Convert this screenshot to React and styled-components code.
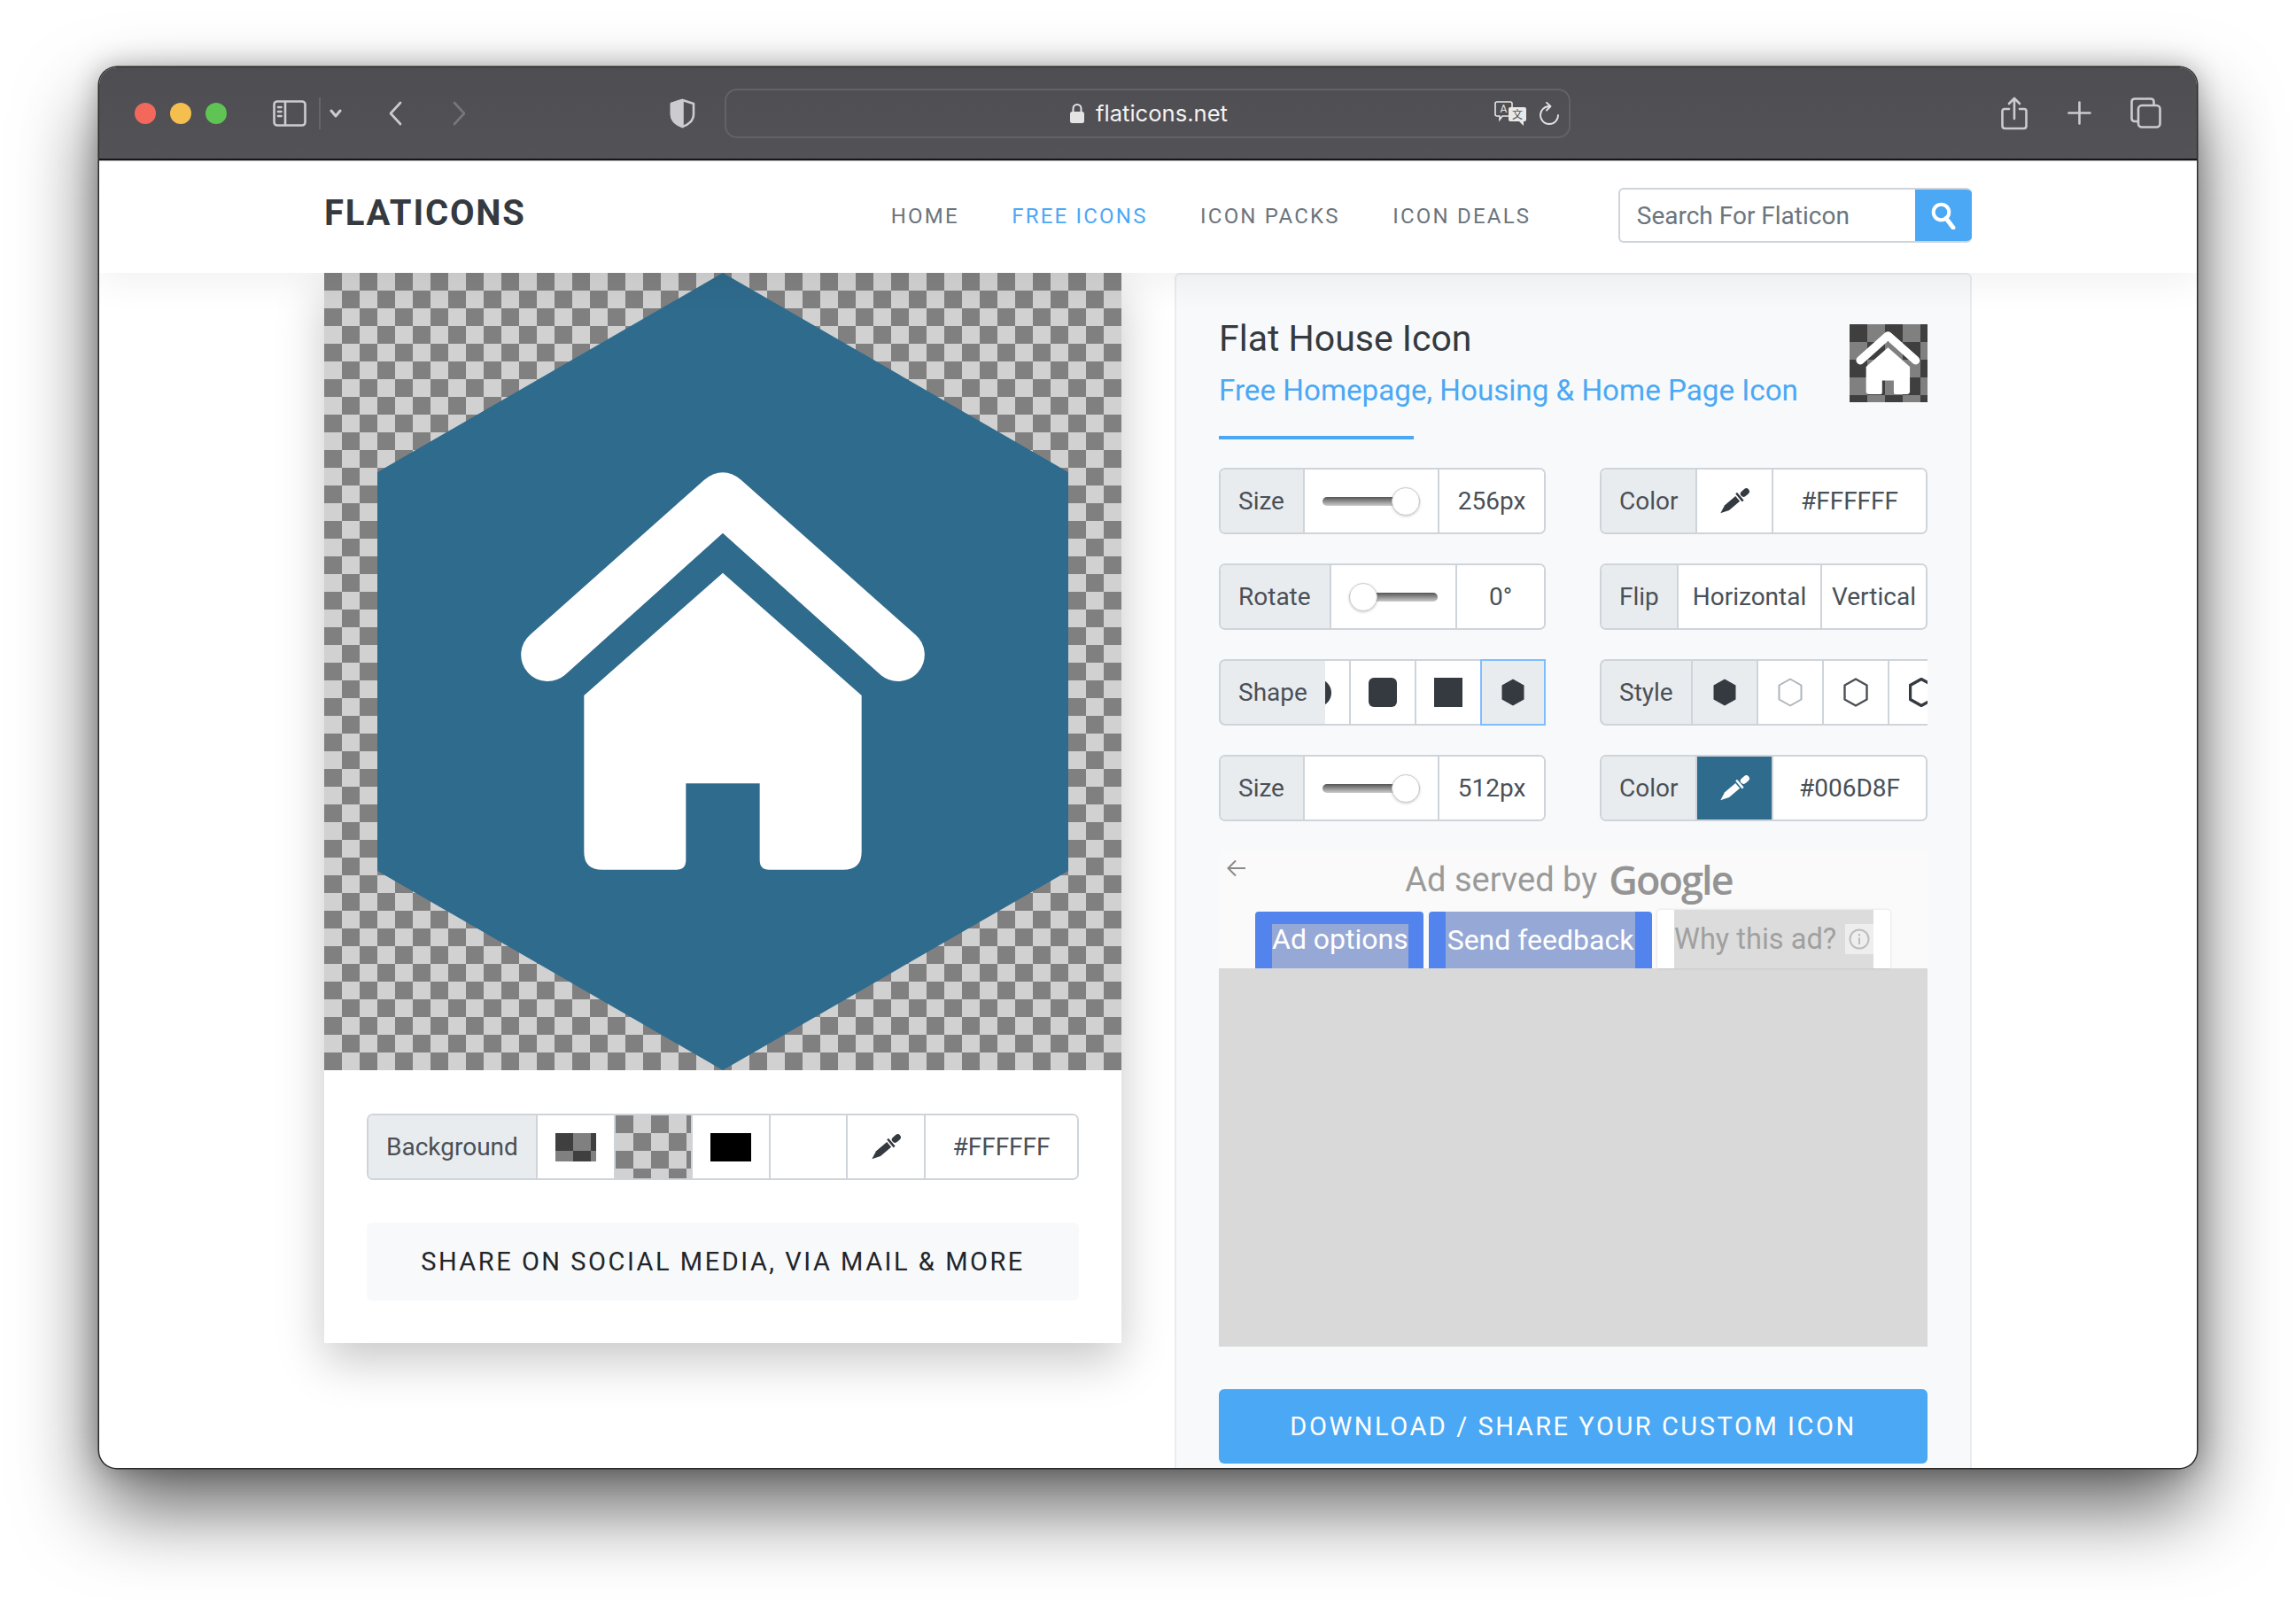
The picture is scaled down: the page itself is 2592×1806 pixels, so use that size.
import React from "react";
import styled, { createGlobalStyle, css } from "styled-components";

const BLUE = "#4ba8f4";
const TEAL = "#2f6b8d";
const LINE = "#ced4da";
const ICON = "#cbcbd0";

const checker = (dark, light, size = 40) => css`
  background: repeating-conic-gradient(${light} 0 25%, ${dark} 0 50%) 0 0 / ${size}px ${size}px;
`;

const GlobalStyle = createGlobalStyle`
  * { box-sizing: border-box; }
  html, body { margin: 0; background: #fff; }
  body { font-family: Roboto, "Liberation Sans", sans-serif; }
`;

const Page = styled.div`
  width: 2592px;
  height: 1806px;
  padding: 76px 0 0 112px;
  overflow: hidden;
`;

const Window = styled.div`
  width: 2368px;
  height: 1581px;
  border-radius: 20px;
  overflow: hidden;
  background: #fff;
  display: flex;
  flex-direction: column;
  box-shadow: 0 0 0 1.5px #2a2a2a, 0 0 30px rgba(0, 0, 0, 0.3), 0 44px 90px rgba(0, 0, 0, 0.62);
`;

const Toolbar = styled.div`
  height: 105px;
  flex: none;
  display: flex;
  align-items: center;
  padding-left: 40px;
  background: linear-gradient(#4e4d52, #535257);
  border-bottom: 2px solid #161616;
  box-shadow: 0 1px 0 #bbb;
  position: relative;
  z-index: 3;
`;

const Lights = styled.div`
  display: flex;
  gap: 16px;
`;

const Light = styled.span`
  width: 24px;
  height: 24px;
  border-radius: 50%;
  background: ${(p) => p.$color};
`;

const ToolIcon = styled.svg`
  flex: none;
  display: block;
  margin-left: ${(p) => p.$left}px;
  fill: none;
  stroke: ${(p) => (p.$dim ? "#77767b" : ICON)};
  stroke-width: 2.6;
  stroke-linecap: round;
  stroke-linejoin: round;
`;

const ToolDivider = styled.span`
  width: 2px;
  height: 36px;
  margin-left: 14px;
  background: #66656a;
`;

const UrlBar = styled.div`
  width: 955px;
  height: 56px;
  margin-left: 33px;
  border: 2px solid #636267;
  border-radius: 14px;
  display: grid;
  grid-template-columns: 1fr auto 1fr;
  align-items: center;
  padding-right: 11px;
`;

const UrlText = styled.div`
  grid-column: 2;
  display: flex;
  align-items: center;
  gap: 13px;
  margin-left: 14px;
  color: #f2f2f2;
  font-family: Inter, sans-serif;
  font-size: 25.6px;
`;

const UrlTools = styled.div`
  grid-column: 3;
  display: flex;
  justify-content: flex-end;
  align-items: center;
  gap: 14px;
`;

const Nav = styled.header`
  height: 127px;
  flex: none;
  display: flex;
  align-items: center;
  padding-left: 254px;
  background: #fff;
  box-shadow: 0 10px 40px rgba(0, 0, 0, 0.06);
  position: relative;
  z-index: 2;
`;

const Logo = styled.div`
  font-size: 40px;
  font-weight: 700;
  letter-spacing: 1.8px;
  color: #343a40;
  margin-top: -8px;
`;

const NavLinks = styled.nav`
  display: flex;
  gap: 59.5px;
  margin-left: 412px;
  margin-top: -2px;
`;

const NavLink = styled.a`
  font-size: 24px;
  letter-spacing: 2.2px;
  color: ${(p) => (p.$active ? BLUE : "#6c757d")};
`;

const Search = styled.div`
  width: 399px;
  height: 62px;
  margin-left: 98.5px;
  margin-top: -3px;
  display: flex;
  border: 2px solid ${LINE};
  border-right: none;
  border-radius: 6px;
  overflow: hidden;
`;

const SearchText = styled.div`
  flex: 1;
  display: flex;
  align-items: center;
  padding-left: 19px;
  font-size: 28px;
  color: #6c757d;
`;

const SearchButton = styled.div`
  width: 64px;
  margin: -2px 0;
  background: ${BLUE};
  display: flex;
  align-items: center;
  justify-content: center;
`;

const Content = styled.main`
  flex: 1;
  min-height: 0;
  display: flex;
  align-items: flex-start;
  gap: 60px;
  padding-left: 254px;
`;

const PreviewCard = styled.section`
  width: 900px;
  flex: none;
  background: #fff;
  box-shadow: 0 20px 50px rgba(0, 0, 0, 0.22);
`;

const Preview = styled.div`
  height: 900px;
  ${checker("#808080", "#d1d1d1")}
`;

const PreviewSvg = styled.svg`
  display: block;
`;

const CardBody = styled.div`
  padding: 49px 48px 48px;
`;

const Group = styled.div`
  display: flex;
  height: 75px;
  border: 2px solid ${LINE};
  border-radius: 7px;
  background: #fff;
  overflow: hidden;
`;

const Label = styled.div`
  flex: none;
  width: ${(p) => p.$w}px;
  background: #e9ecef;
  color: #495057;
  font-size: 28px;
  display: flex;
  align-items: center;
  padding-left: 20px;
`;

const Cell = styled.div`
  flex: ${(p) => (p.$w ? "none" : 1)};
  width: ${(p) => (p.$w ? `${p.$w}px` : "auto")};
  min-width: 0;
  border-left: 2px solid ${LINE};
  background: ${(p) => p.$bg || "#fff"};
  color: #495057;
  font-size: 28px;
  display: flex;
  align-items: center;
  justify-content: center;
  white-space: nowrap;
`;

const CheckerCell = styled(Cell)`
  ${checker("#808080", "#d1d1d1")}
  background-origin: padding-box;
`;

const Swatch = styled.span`
  width: 46px;
  height: 32px;
  ${(p) => (p.$dark ? checker("#3f3f3f", "#808080") : "background: #000;")}
`;

const ShareButton = styled.div`
  height: 88px;
  margin-top: 48px;
  border-radius: 6px;
  background: #f8f9fa;
  color: #212529;
  font-size: 29px;
  letter-spacing: 2.52px;
  display: flex;
  align-items: center;
  justify-content: center;
`;

const Panel = styled.aside`
  width: 900px;
  height: 1400px;
  flex: none;
  background: #f8f9fa;
  border: 2px solid #e9ecef;
  border-radius: 6px 6px 0 0;
  padding: 49px 48px 0;
`;

const PanelHead = styled.div`
  display: flex;
  justify-content: space-between;
  align-items: flex-start;
`;

const Title = styled.h1`
  margin: 0;
  font-size: 41px;
  line-height: 46px;
  font-weight: 400;
  color: #343a40;
`;

const Subtitle = styled.h2`
  margin: 16px 0 0;
  font-size: 33.2px;
  line-height: 40px;
  font-weight: 400;
  color: ${BLUE};
`;

const Thumb = styled.div`
  width: 88px;
  height: 88px;
  margin-top: 7px;
  display: flex;
  align-items: center;
  justify-content: center;
  ${checker("#3f3f3f", "#808080")}
`;

const Underline = styled.div`
  width: 220px;
  height: 4px;
  margin-top: 31px;
  background: ${BLUE};
`;

const Controls = styled.div`
  display: grid;
  grid-template-columns: 369px 370px;
  gap: 33px 61px;
  margin-top: 32px;
`;

const SliderCell = styled(Cell)`
  padding: 0 20px;
  justify-content: ${(p) => (p.$knob === "left" ? "flex-end" : "flex-start")};
`;

const Track = styled.div`
  position: relative;
  width: ${(p) => p.$w}px;
  height: 10px;
  border-radius: 5px;
  background: linear-gradient(#555, #ccc);
`;

const Knob = styled.span`
  position: absolute;
  top: -11px;
  ${(p) => (p.$at === "left" ? "left: 0;" : "right: 0;")}
  width: 32px;
  height: 32px;
  border-radius: 50%;
  background: #fff;
  border: 1px solid #ccc;
  box-shadow: 0 1px 3px rgba(0, 0, 0, 0.2);
`;

const ChoiceGroup = styled.div`
  display: flex;
  height: 75px;
`;

const ChoiceLabel = styled(Label)`
  width: ${(p) => p.$w}px;
  border: 2px solid ${LINE};
  border-right: none;
  border-radius: 7px 0 0 7px;
`;

const Choices = styled.div`
  flex: 1;
  min-width: 0;
  overflow: hidden;
  display: flex;
  justify-content: ${(p) => (p.$end ? "flex-end" : "flex-start")};
`;

const Choice = styled.div`
  flex: none;
  width: 74px;
  border: 2px solid ${(p) => (p.$ring ? "#80bdff" : LINE)};
  ${(p) => !p.$ring && "border-right: none;"}
  background: ${(p) => (p.$on ? "#e9ecef" : "#fff")};
  display: flex;
  align-items: center;
  justify-content: center;
`;

const ShapeSvg = styled.svg`
  display: block;
  flex: none;
`;

const AdBox = styled.div`
  margin-top: 33px;
  position: relative;
  background: #fafafa;
`;

const AdBack = styled.svg`
  position: absolute;
  left: 9px;
  top: 10px;
  fill: none;
  stroke: #8a8a8a;
  stroke-width: 2;
`;

const AdTitle = styled.div`
  height: 65px;
  margin-bottom: 2px;
  display: flex;
  align-items: center;
  justify-content: center;
  gap: 13px;
  font-size: 38px;
  color: #9a9a9a;
  padding-right: 10px;
`;

const GoogleWord = styled.span`
  font-family: "Open Sans", sans-serif;
  font-size: 45px;
  font-weight: 600;
  letter-spacing: -1.9px;
  color: #949494;
`;

const AdButtons = styled.div`
  display: flex;
  align-items: flex-end;
  gap: 6px;
  height: 66px;
  padding-left: 41px;
`;

const AdButton = styled.div`
  width: ${(p) => p.$w}px;
  height: 64px;
  padding: 0 19px;
  border-radius: 4px 4px 0 0;
  background: #5383ec;
  display: flex;
  align-items: flex-end;
`;

const AdLabel = styled.span`
  flex: 1;
  height: ${(p) => p.$h}px;
  background: #96a9d6;
  color: #fff;
  font-size: 32px;
  white-space: nowrap;
  display: flex;
  align-items: center;
  justify-content: center;
  padding-bottom: ${(p) => (p.$h === 50 ? 16 : 0)}px;
`;

const WhyButton = styled.div`
  height: 66px;
  padding: 0 19px;
  border-radius: 4px 4px 0 0;
  background: #fff;
  box-shadow: 0 0 3px rgba(0, 0, 0, 0.15);
  display: flex;
`;

const WhyInner = styled.div`
  background: #dcdcdc;
  color: #a0a0a0;
  font-size: 32.6px;
  display: flex;
  align-items: center;
  gap: 10px;
  white-space: nowrap;
`;

const InfoBox = styled.span`
  width: 32px;
  height: 34px;
  background: #eee;
  display: flex;
  align-items: center;
  justify-content: center;
`;

const AdBody = styled.div`
  height: 427px;
  background: #d9d9d9;
`;

const DownloadButton = styled.div`
  height: 84px;
  margin-top: 48px;
  border-radius: 6px;
  background: ${BLUE};
  color: #fff;
  font-size: 29px;
  letter-spacing: 2.55px;
  display: flex;
  align-items: center;
  justify-content: center;
`;

const HouseGlyph = ({ size, x, y }) => (
  <svg width={size} height={size} x={x} y={y} viewBox="0 0 1560 1560" fill="#fff" style={{ display: "block" }}>
    <path d="M117 648 L705 125 Q768 75 830 125 L1419 648 A90 90 0 1 1 1299 782 L768 305 L237 782 A90 90 0 1 1 117 648 Z" />
    <path d="M768 440 L1238 855 V1385 Q1238 1445 1175 1445 H925 Q893 1445 893 1412 V1153 H643 V1412 Q643 1445 610 1445 H360 Q298 1445 298 1385 V855 Z" />
  </svg>
);

const Dropper = ({ color = "#343a40" }) => (
  <svg width="36" height="32" viewBox="0 0 36 32" fill={color} style={{ display: "block" }}>
    <g transform="rotate(50 18 16)">
      <rect x="14.5" y="-5" width="7" height="11" rx="3.5" />
      <rect x="12" y="7" width="12" height="2.6" rx="1" />
      <path d="M14.2 11.2 H21.8 V27 L18 36.5 L14.2 27 Z" />
    </g>
  </svg>
);

const Hex = ({ fill = "#343a40", stroke = "none", width = 1 }) => (
  <ShapeSvg width="28" height="33" viewBox="0 0 28 33">
    <polygon
      points="14,1.5 26.5,8.5 26.5,24.5 14,31.5 1.5,24.5 1.5,8.5"
      fill={fill}
      stroke={stroke}
      strokeWidth={width}
      strokeLinejoin="round"
    />
  </ShapeSvg>
);

const Square = ({ radius = 0 }) => (
  <ShapeSvg width="32" height="33" viewBox="0 0 32 33">
    <rect width="32" height="33" rx={radius} fill="#343a40" />
  </ShapeSvg>
);

const Slider = ({ track, at }) => (
  <SliderCell $w={at === "left" ? 142 : 152} $knob={at}>
    <Track $w={track}>
      <Knob $at={at} />
    </Track>
  </SliderCell>
);

export default function App() {
  return (
    <>
      <GlobalStyle />
      <Page>
        <Window>
          <Toolbar>
            <Lights>
              <Light $color="#f2695c" />
              <Light $color="#f5bf4f" />
              <Light $color="#5fc454" />
            </Lights>
            <ToolIcon $left={52} width="38" height="30" viewBox="0 0 38 30">
              <rect x="1.5" y="1.5" width="35" height="27" rx="3.5" />
              <path d="M14 2 V28 M6 8 H9.5 M6 13 H9.5 M6 18 H9.5" />
            </ToolIcon>
            <ToolDivider />
            <ToolIcon $left={10} width="14" height="10" viewBox="0 0 14 10" style={{ strokeWidth: 3 }}>
              <path d="M2 2 L7 8 L12 2" />
            </ToolIcon>
            <ToolIcon $left={52} width="16" height="28" viewBox="0 0 16 28">
              <path d="M14 2 L3 14 L14 26" />
            </ToolIcon>
            <ToolIcon $left={57} $dim width="16" height="28" viewBox="0 0 16 28">
              <path d="M2 2 L13 14 L2 26" />
            </ToolIcon>
            <ToolIcon $left={229} width="29" height="34" viewBox="0 0 29 34">
              <path d="M14.5 2 L27 6 V18 C27 25 21 30 14.5 32 C8 30 2 25 2 18 V6 Z" />
              <path d="M14.5 2 L2 6 V18 C2 25 8 30 14.5 32 Z" fill={ICON} />
            </ToolIcon>
            <UrlBar>
              <UrlText>
                <svg width="16" height="23" viewBox="0 0 16 23" style={{ display: "block" }}>
                  <path d="M3.5 11 V6.5 A4.5 4.5 0 0 1 12.5 6.5 V11" fill="none" stroke="#e4e4e4" strokeWidth="2" />
                  <rect y="10" width="16" height="13" rx="2.5" fill="#e4e4e4" />
                </svg>
                flaticons.net
              </UrlText>
              <UrlTools>
                <svg width="37" height="28" viewBox="0 0 37 28" style={{ display: "block" }}>
                  <path d="M3 1 H18 Q20 1 20 3 V15 Q20 17 18 17 H9 L6 21 V17 H3 Q1 17 1 15 V3 Q1 1 3 1 Z" fill="#4f4e53" stroke="#e8e8e8" strokeWidth="1.6" />
                  <text x="10.5" y="13" fontSize="12" fill="#e8e8e8" textAnchor="middle" fontFamily="Roboto, sans-serif">A</text>
                  <path d="M18 7 H34 Q36 7 36 9 V21 Q36 23 34 23 H33 V28 L28 23 H18 Q16 23 16 21 V9 Q16 7 18 7 Z" fill="#e8e8e8" />
                  <text x="26" y="20" fontSize="12" fill="#4f4e53" textAnchor="middle" fontFamily='"Noto Sans CJK SC", sans-serif'>文</text>
                </svg>
                <svg width="22" height="26" viewBox="0 0 22 26" fill="none" stroke="#e4e4e4" strokeWidth="1.8" strokeLinecap="round" strokeLinejoin="round" style={{ display: "block" }}>
                  <path d="M11 5 A10 10 0 1 0 21 15" />
                  <path d="M8 0.8 L12.5 5 L8 9.5" />
                </svg>
              </UrlTools>
            </UrlBar>
            <ToolIcon $left={486} width="30" height="38" viewBox="0 0 30 38">
              <path d="M9 14 H4 Q1.5 14 1.5 16.5 V33 Q1.5 36 4.5 36 H25.5 Q28.5 36 28.5 33 V16.5 Q28.5 14 26 14 H21" />
              <path d="M15 25 V2 M9 8 L15 2 L21 8" />
            </ToolIcon>
            <ToolIcon $left={45} width="27" height="27" viewBox="0 0 27 27">
              <path d="M13.5 1.5 V25.5 M1.5 13.5 H25.5" />
            </ToolIcon>
            <ToolIcon $left={44} width="35" height="35" viewBox="0 0 35 35">
              <path d="M8 27 H5 Q1.5 27 1.5 23.5 V5 Q1.5 1.5 5 1.5 H23 Q26.5 1.5 26.5 5 V8" />
              <rect x="9" y="9" width="24.5" height="24.5" rx="4" />
            </ToolIcon>
          </Toolbar>

          <Nav>
            <Logo>FLATICONS</Logo>
            <NavLinks>
              <NavLink>HOME</NavLink>
              <NavLink $active>FREE ICONS</NavLink>
              <NavLink>ICON PACKS</NavLink>
              <NavLink>ICON DEALS</NavLink>
            </NavLinks>
            <Search>
              <SearchText>Search For Flaticon</SearchText>
              <SearchButton>
                <svg width="28" height="31" viewBox="0 0 28 31" fill="none" stroke="#fff" style={{ display: "block" }}>
                  <circle cx="11.5" cy="11.5" r="8.8" strokeWidth="4" />
                  <path d="M17 18.5 L25 29" strokeWidth="5" strokeLinecap="round" />
                </svg>
              </SearchButton>
            </Search>
          </Nav>

          <Content>
            <PreviewCard>
              <Preview>
                <PreviewSvg width="900" height="900" viewBox="0 0 900 900">
                  <polygon points="450,0 840,225 840,675 450,900 60,675 60,225" fill={TEAL} />
                  <HouseGlyph size={520} x={194} y={192} />
                </PreviewSvg>
              </Preview>
              <CardBody>
                <Group>
                  <Label $w={189}>Background</Label>
                  <Cell $w={88}><Swatch $dark /></Cell>
                  <CheckerCell $w={87} />
                  <Cell $w={88}><Swatch /></Cell>
                  <Cell $w={87} />
                  <Cell $w={88}><Dropper /></Cell>
                  <Cell>#FFFFFF</Cell>
                </Group>
                <ShareButton>SHARE ON SOCIAL MEDIA, VIA MAIL &amp; MORE</ShareButton>
              </CardBody>
            </PreviewCard>

            <Panel>
              <PanelHead>
                <div>
                  <Title>Flat House Icon</Title>
                  <Subtitle>Free Homepage, Housing &amp; Home Page Icon</Subtitle>
                </div>
                <Thumb><HouseGlyph size={82} /></Thumb>
              </PanelHead>
              <Underline />

              <Controls>
                <Group>
                  <Label $w={93}>Size</Label>
                  <Slider track={110} at="right" />
                  <Cell>256px</Cell>
                </Group>
                <Group>
                  <Label $w={106}>Color</Label>
                  <Cell $w={86}><Dropper /></Cell>
                  <Cell>#FFFFFF</Cell>
                </Group>
                <Group>
                  <Label $w={123}>Rotate</Label>
                  <Slider track={101} at="left" />
                  <Cell>0°</Cell>
                </Group>
                <Group>
                  <Label $w={85}>Flip</Label>
                  <Cell $w={162}>Horizontal</Cell>
                  <Cell>Vertical</Cell>
                </Group>
                <ChoiceGroup>
                  <ChoiceLabel $w={120}>Shape</ChoiceLabel>
                  <Choices $end>
                    <Choice>
                      <ShapeSvg width="32" height="32" viewBox="0 0 32 32"><circle cx="16" cy="16" r="16" fill="#343a40" /></ShapeSvg>
                    </Choice>
                    <Choice><Square radius={6} /></Choice>
                    <Choice><Square /></Choice>
                    <Choice $on $ring><Hex /></Choice>
                  </Choices>
                </ChoiceGroup>
                <ChoiceGroup>
                  <ChoiceLabel $w={103}>Style</ChoiceLabel>
                  <Choices>
                    <Choice $on><Hex /></Choice>
                    <Choice><Hex fill="none" stroke="#adb5bd" width={2} /></Choice>
                    <Choice><Hex fill="none" stroke="#495057" width={2.4} /></Choice>
                    <Choice><Hex fill="none" stroke="#343a40" width={3.4} /></Choice>
                  </Choices>
                </ChoiceGroup>
                <Group>
                  <Label $w={93}>Size</Label>
                  <Slider track={110} at="right" />
                  <Cell>512px</Cell>
                </Group>
                <Group>
                  <Label $w={106}>Color</Label>
                  <Cell $w={86} $bg={TEAL}><Dropper color="#fff" /></Cell>
                  <Cell>#006D8F</Cell>
                </Group>
              </Controls>

              <AdBox>
                <AdBack width="22" height="20" viewBox="0 0 22 20">
                  <path d="M21 10 H2 M10 1.5 L1.5 10 L10 18.5" />
                </AdBack>
                <AdTitle>
                  Ad served by <GoogleWord>Google</GoogleWord>
                </AdTitle>
                <AdButtons>
                  <AdButton $w={190}><AdLabel $h={50}>Ad options</AdLabel></AdButton>
                  <AdButton $w={252}><AdLabel $h={64}>Send feedback</AdLabel></AdButton>
                  <WhyButton>
                    <WhyInner>
                      Why this ad?
                      <InfoBox>
                        <svg width="24" height="24" viewBox="0 0 24 24" fill="none" stroke="#bdbdbd" strokeWidth="2" style={{ display: "block" }}>
                          <circle cx="12" cy="12" r="10.5" />
                          <path d="M12 10.5 V18 M12 6 V8.5" />
                        </svg>
                      </InfoBox>
                    </WhyInner>
                  </WhyButton>
                </AdButtons>
                <AdBody />
              </AdBox>
              <DownloadButton>DOWNLOAD / SHARE YOUR CUSTOM ICON</DownloadButton>
            </Panel>
          </Content>
        </Window>
      </Page>
    </>
  );
}
